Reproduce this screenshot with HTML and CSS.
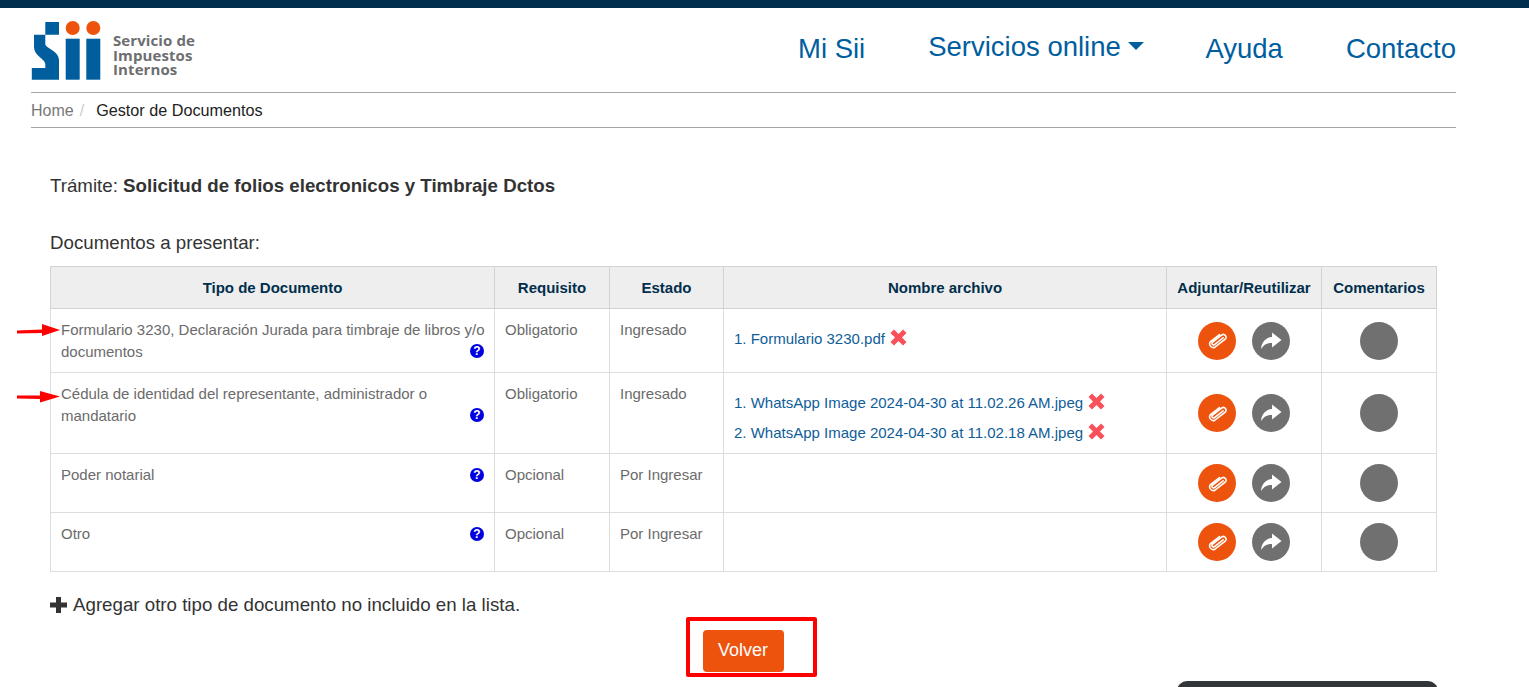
FILE: index.html
```html
<!DOCTYPE html>
<html lang="es">
<head>
<meta charset="utf-8">
<title>Gestor de Documentos</title>
<link rel="stylesheet" href="styles.css">
</head>
<body>
<svg class="defs" width="0" height="0">
  <symbol id="clip" viewBox="0 0 24 24"><g transform="translate(12 12) rotate(-38)"><path fill="none" stroke="#fff" stroke-width="1.800" stroke-linecap="round" d="M7 1.500H-6A1.800 1.800 0 0 1 -6 -2H7.500A3 3 0 0 1 7.500 4.200H-7A4.200 4.200 0 0 1 -7 -4H6"/></g></symbol>
  <symbol id="share" viewBox="0 0 22 18"><path fill="#fff" d="M12 0.500L21.500 8L12 15.500V11C7 11 4 12.500 1 17C1.500 10 6 5.500 12 5Z"/></symbol>
  <symbol id="cross" viewBox="0 0 17 17"><path fill="#f9505a" d="M4 0.500L8.500 5L13 0.500L16.500 4L12 8.500L16.500 13L13 16.500L8.500 12L4 16.500L0.500 13L5 8.500L0.500 4Z"/></symbol>
</svg>
<div class="topbar"></div>
<div class="wrap">
  <header class="header">
    <a class="logo">
      <svg class="logo-mark" width="72" height="60" viewBox="0 0 72 60">
        <path fill="#005e9f" d="M14.300 1H28V13.700H14.300ZM3 13.700H14.300V23C14.300 27 28 30 28 39V58.700H0.800V47H14.300V43C14.300 38 3 35 3 26Z"/>
        <rect x="34.700" y="17.700" width="14" height="41" fill="#005e9f"/>
        <rect x="55.300" y="17.700" width="14" height="41" fill="#005e9f"/>
        <circle cx="41.700" cy="7" r="7" fill="#ee530e"/>
        <circle cx="62.300" cy="7" r="7" fill="#ee530e"/>
      </svg>
      <span class="logo-text">Servicio de<br>Impuestos<br>Internos</span>
    </a>
    <nav class="nav">
      <a class="nav-item">Mi Sii</a>
      <a class="nav-item nav-raised">Servicios online <span class="caret"></span></a>
      <a class="nav-item">Ayuda</a>
      <a class="nav-item">Contacto</a>
    </nav>
  </header>
  <div class="crumbs"><span class="crumb-home">Home</span><span class="crumb-sep">/</span><span class="crumb-now">Gestor de Documentos</span></div>
</div>
<main class="main">
  <p class="tramite">Trámite: <strong>Solicitud de folios electronicos y Timbraje Dctos</strong></p>
  <p class="docs-label">Documentos a presentar:</p>
  <table class="docs">
    <colgroup>
      <col class="c1"><col class="c2"><col class="c3"><col class="c4"><col class="c5"><col class="c6">
    </colgroup>
    <thead>
      <tr><th>Tipo de Documento</th><th>Requisito</th><th>Estado</th><th>Nombre archivo</th><th>Adjuntar/Reutilizar</th><th>Comentarios</th></tr>
    </thead>
    <tbody>
      <tr class="r1">
        <td class="tipo">
          <svg class="arrow" width="44" height="12" viewBox="0 0 44 12"><path fill="#f00" d="M0 6.500L25 5.500V0L43 6L25 12V9L0 9.500Z"/></svg>
          Formulario 3230, Declaración Jurada para timbraje de libros y/o documentos
          <span class="help help-low">?</span>
        </td>
        <td>Obligatorio</td><td>Ingresado</td>
        <td class="files"><div class="file">1. Formulario 3230.pdf <svg class="x"><use href="#cross"/></svg></div></td>
        <td class="acts"><span class="round orange"><svg class="ico-clip"><use href="#clip"/></svg></span><span class="round gray"><svg class="ico-share"><use href="#share"/></svg></span></td>
        <td class="acts"><span class="round gray"></span></td>
      </tr>
      <tr class="r2">
        <td class="tipo">
          <svg class="arrow arrow-b" width="44" height="12" viewBox="0 0 44 12"><path fill="#f00" d="M0 4.500L23 4.500V0L43 5.500L23 11.500V8L0 7.500Z"/></svg>
          Cédula de identidad del representante, administrador o mandatario
          <span class="help help-low">?</span>
        </td>
        <td>Obligatorio</td><td>Ingresado</td>
        <td class="files">
          <div class="file">1. WhatsApp Image 2024-04-30 at 11.02.26 AM.jpeg <svg class="x"><use href="#cross"/></svg></div>
          <div class="file">2. WhatsApp Image 2024-04-30 at 11.02.18 AM.jpeg <svg class="x"><use href="#cross"/></svg></div>
        </td>
        <td class="acts"><span class="round orange"><svg class="ico-clip"><use href="#clip"/></svg></span><span class="round gray"><svg class="ico-share"><use href="#share"/></svg></span></td>
        <td class="acts"><span class="round gray"></span></td>
      </tr>
      <tr class="r3">
        <td class="tipo">Poder notarial <span class="help">?</span></td>
        <td>Opcional</td><td>Por Ingresar</td><td></td>
        <td class="acts"><span class="round orange"><svg class="ico-clip"><use href="#clip"/></svg></span><span class="round gray"><svg class="ico-share"><use href="#share"/></svg></span></td>
        <td class="acts"><span class="round gray"></span></td>
      </tr>
      <tr class="r3">
        <td class="tipo">Otro <span class="help">?</span></td>
        <td>Opcional</td><td>Por Ingresar</td><td></td>
        <td class="acts"><span class="round orange"><svg class="ico-clip"><use href="#clip"/></svg></span><span class="round gray"><svg class="ico-share"><use href="#share"/></svg></span></td>
        <td class="acts"><span class="round gray"></span></td>
      </tr>
    </tbody>
  </table>
  <p class="add"><svg class="plus" width="18" height="16" viewBox="0 0 18 16"><path fill="#333" d="M6 0H11V5.500H17V10.500H11V16H6V10.500H0V5.500H6Z"/></svg>Agregar otro tipo de documento no incluido en la lista.</p>
  <div class="actions"><div class="mark"><a class="volver">Volver</a></div></div>
</main>
<div class="toast"></div>
</body>
</html>
```
FILE: styles.css
```css
html, body { margin: 0; padding: 0; height: 687px; overflow: hidden; background: #fff; }
body { font-family: "Liberation Sans", Arial, sans-serif; color: #333; position: relative; }
.defs { position: absolute; }
.topbar { height: 8px; background: #012e4c; }
.wrap { width: 1425px; margin-left: 31px; }
.header { display: flex; justify-content: space-between; height: 85px; box-sizing: border-box; border-bottom: 1px solid #a6a6a6; }
.logo { display: flex; align-items: flex-start; padding-top: 13px; }
.logo-mark { display: block; }
.logo-text { font-family: "Open Sans", sans-serif; font-weight: 700; font-size: 15px; line-height: 14.700px; color: #6d6e70; margin: 12px 0 0 10px; letter-spacing: .1px; }
.nav { display: flex; gap: 63px; padding-top: 25px; }
.nav-item { font-size: 27.500px; line-height: 32px; color: #005e9f; }
.nav-raised { margin: -2px -2px 0 0; }
.caret { display: inline-block; width: 0; height: 0; border-left: 8px solid transparent; border-right: 8px solid transparent; border-top: 8px solid #005e9f; vertical-align: 6px; }
.crumbs { height: 35px; box-sizing: border-box; border-bottom: 1px solid #a6a6a6; font-size: 16px; line-height: 35px; display: flex; }
.crumb-home { color: #777; }
.crumb-sep { color: #ccc; margin: 0 12px 0 6px; }
.crumb-now { color: #222; font-size: 16.200px; }
.main { padding: 0 0 0 50px; width: 1387px; }
.main p { margin: 0; }
.tramite { font-size: 18.720px; line-height: 24px; padding-top: 46px; }
.docs-label { font-size: 18.720px; line-height: 24px; padding-top: 33px; padding-bottom: 11px; }
.docs { border-collapse: collapse; table-layout: fixed; width: 1387px; font-size: 15px; color: #6b6b6b; }
.c1 { width: 444px; } .c2 { width: 115px; } .c3 { width: 114px; } .c4 { width: 443px; } .c5 { width: 155px; } .c6 { width: 115px; }
.docs th, .docs td { border: 1px solid #ddd; padding: 10px 10px 0; vertical-align: top; line-height: 22px; }
.docs th { background: #eee; color: #012e4c; font-weight: 700; height: 42px; box-sizing: border-box; vertical-align: middle; padding: 0; border-color: #d2d2d2; }
.r1 td { height: 64px; box-sizing: border-box; }
.r2 td { height: 81px; box-sizing: border-box; }
.r3 td { height: 59px; box-sizing: border-box; }
.docs td.tipo { position: relative; padding-right: 6px; }
.arrow { position: absolute; left: -34px; top: 15px; }
.arrow-b { top: 18px; }
.help { position: absolute; right: 10px; top: 14px; width: 14px; height: 14px; border-radius: 50%; background: #0000e0; color: #fff; font-size: 12px; line-height: 14px; font-weight: 700; text-align: center; }
.help-low { top: 35px; }
.docs td.files { color: #0f5d99; padding-top: 19px; }
.file { line-height: 22px; margin-bottom: 8px; }
.x { width: 17px; height: 17px; vertical-align: -2px; margin-left: 1px; }
.docs td.acts { text-align: center; white-space: nowrap; font-size: 0; padding: 0; vertical-align: middle; }
.round { display: inline-flex; align-items: center; justify-content: center; width: 38px; height: 38px; border-radius: 50%; vertical-align: top; }
.round + .round { margin-left: 16px; }
.ico-clip { width: 21px; height: 21px; }
.ico-share { width: 22px; height: 18px; }
.orange { background: #ee530e; }
.gray { background: #707070; }
.add { font-size: 18.720px; line-height: 24px; padding-top: 21px; display: flex; align-items: center; }
.plus { margin-right: 5px; }
.actions { display: flex; justify-content: center; padding-left: 15px; }
.mark { border: 4px solid #f00; border-radius: 2px; width: 131px; height: 60px; box-sizing: border-box; padding: 9px 13px; }
.volver { display: block; width: 81px; height: 42px; background: #ee530e; color: #fff; border-radius: 4px; font-size: 18px; line-height: 40px; text-align: center; }
.toast { position: absolute; left: 1177px; top: 681px; width: 261px; height: 40px; background: #323639; border-radius: 10px; }
```
